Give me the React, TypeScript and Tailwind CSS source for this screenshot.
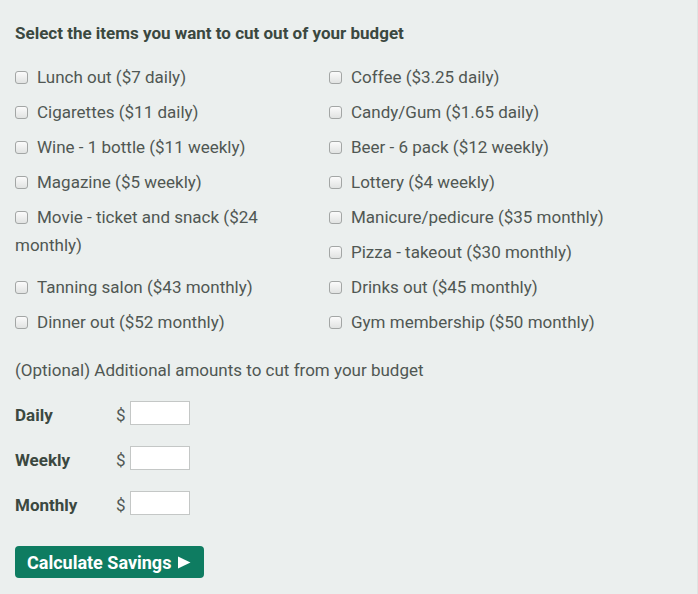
import { useState } from "react";

type Item = { label: string; span?: boolean };

// grid order: left, right, left, right ... movie spans two rows on the left
const items: Item[] = [
  { label: "Lunch out ($7 daily)" },
  { label: "Coffee ($3.25 daily)" },
  { label: "Cigarettes ($11 daily)" },
  { label: "Candy/Gum ($1.65 daily)" },
  { label: "Wine - 1 bottle ($11 weekly)" },
  { label: "Beer - 6 pack ($12 weekly)" },
  { label: "Magazine ($5 weekly)" },
  { label: "Lottery ($4 weekly)" },
  { label: "Movie - ticket and snack ($24 monthly)", span: true },
  { label: "Manicure/pedicure ($35 monthly)" },
  { label: "Pizza - takeout ($30 monthly)" },
  { label: "Tanning salon ($43 monthly)" },
  { label: "Drinks out ($45 monthly)" },
  { label: "Dinner out ($52 monthly)" },
  { label: "Gym membership ($50 monthly)" },
];

const extras = ["Daily", "Weekly", "Monthly"];

function CheckItem({ item }: { item: Item }) {
  const [on, setOn] = useState(false);
  return (
    <label className={`block leading-[28px] cursor-pointer ${item.span ? "row-span-2" : ""}`}>
      <input
        type="checkbox"
        checked={on}
        onChange={() => setOn(!on)}
        className="appearance-none inline-block align-[-1px] w-[13px] h-[13px] mr-[9px] rounded-[3px] border border-[#a3a6a5] bg-gradient-to-b from-[#fbfbfb] to-[#e1e3e2] checked:bg-[#0e7c61] checked:border-[#0e7c61]"
      />
      {item.label}
    </label>
  );
}

export default function App() {
  return (
    <div
      className="min-h-screen w-full bg-[#ebefee] border-r border-[#dfe3e2] px-[15px] pt-[23px] text-[17px] text-[#505753]"
      style={{ fontFamily: "Roboto, 'Liberation Sans', sans-serif" }}
    >
      {/* Heading */}
      <h2 className="text-[17px] leading-[20px] font-bold text-[#3b4840]">
        Select the items you want to cut out of your budget
      </h2>

      {/* Items */}
      <div className="mt-[20px] grid grid-cols-[300px_1fr] gap-x-[14px] gap-y-[7px] auto-rows-[28px]">
        {items.map((it) => (
          <CheckItem key={it.label} item={it} />
        ))}
      </div>

      {/* Optional amounts */}
      <p className="mt-[22px] leading-[24px]">(Optional) Additional amounts to cut from your budget</p>

      <div className="mt-[19px] flex flex-col gap-[21px]">
        {extras.map((name) => (
          <div key={name} className="flex items-center h-[24px]">
            <span className="w-[101px] font-bold text-[#3b4840] leading-[24px] translate-y-[2px]">{name}</span>
            <span className="w-[14px] leading-[24px] translate-y-[2px]">$</span>
            <input
              type="text"
              className="w-[60px] h-[24px] bg-white border border-[#c4c7c6] outline-none px-1 text-[14px]"
            />
          </div>
        ))}
      </div>

      <button className="mt-[31px] h-[32px] w-[189px] rounded-[4px] bg-[#0e7c61] text-white font-bold text-[18px] text-left pl-[12px] flex items-center">
        Calculate Savings
        <svg className="ml-[6px]" width="14" height="13" viewBox="0 0 14 13">
          <path d="M1 0.5 L13.5 6.5 L1 12.5 Z" fill="white" />
        </svg>
      </button>
    </div>
  );
}
